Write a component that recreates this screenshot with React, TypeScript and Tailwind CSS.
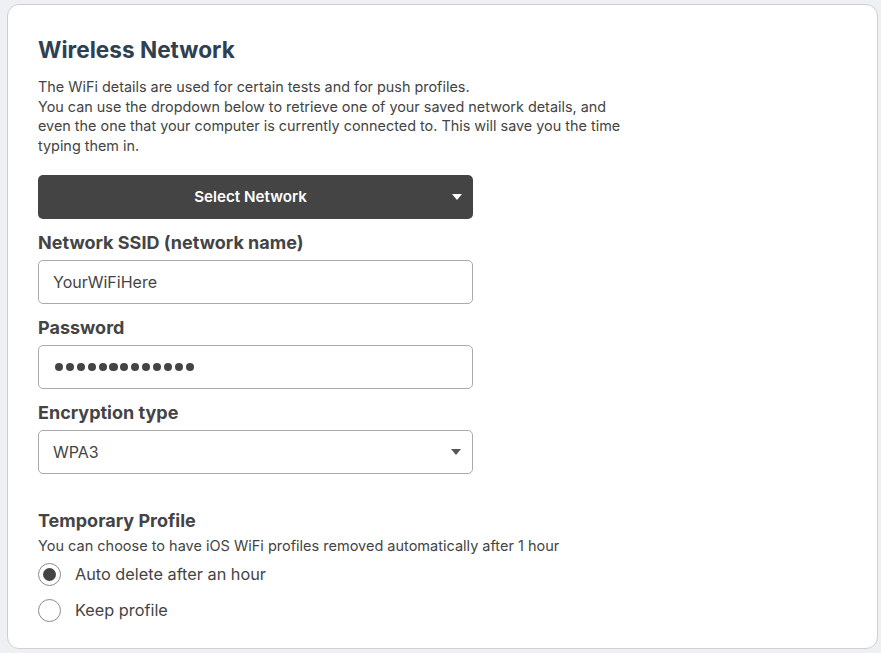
import { useState } from "react"

function Caret() {
  return (
    <svg width="10" height="6" viewBox="0 0 10 6" className="shrink-0">
      <path d="M0 0h10L5 6z" fill="currentColor" />
    </svg>
  )
}

function Radio({ checked, label, onClick }: { checked: boolean; label: string; onClick: () => void }) {
  return (
    <button type="button" onClick={onClick} className="flex items-center gap-[14px] h-[36px] text-left">
      <span className="w-[23px] h-[23px] rounded-full border border-[#8a8a8a] bg-white flex items-center justify-center">
        {checked ? <span className="w-[13px] h-[13px] rounded-full bg-[#444]" /> : null}
      </span>
      <span className="text-[16.3px] text-[#444]">{label}</span>
    </button>
  )
}

export default function App() {
  const [autoDelete, setAutoDelete] = useState(true)
  const dots = Array.from({ length: 13 })
  return (
    <div className="min-h-screen bg-[#eef0f3] pt-[4px] pl-[7px] pr-[4px] pb-[4px] font-['Inter',sans-serif]">
      <div className="bg-white border border-[#cfcfcf] rounded-[12px] w-[871px] h-[645px] px-[30px] pt-[30px]">
        <h1 className="text-[22.6px] font-bold text-[#2f4050] leading-[30px]">Wireless Network</h1>
        <p className="mt-[12px] text-[14.4px] leading-[19.5px] text-[#444] max-w-[592px]">
          The WiFi details are used for certain tests and for push profiles.
          <br />
          You can use the dropdown below to retrieve one of your saved network details, and even the one that your
          computer is currently connected to. This will save you the time typing them in.
        </p>
        <div className="w-[435px] mt-[20px]">
          <button
            type="button"
            className="w-full h-[44px] bg-[#444] rounded-[5px] text-white font-semibold text-[15.2px] flex items-center pl-[11px] pr-[11px]"
          >
            <span className="flex-1 text-center">Select Network</span>
            <Caret />
          </button>
          <div className="mt-[13px] text-[18px] font-bold text-[#444] leading-[22px]">Network SSID (network name)</div>
          <div className="mt-[6px] h-[44px] border border-[#aaa] rounded-[5px] flex items-center px-[14px] text-[16px] text-[#444]">
            YourWiFiHere
          </div>
          <div className="mt-[13px] text-[18px] font-bold text-[#444] leading-[22px]">Password</div>
          <div className="mt-[6px] h-[44px] border border-[#aaa] rounded-[5px] flex items-center gap-[2.7px] px-[16px]">
            {dots.map((_, i) => (
              <span key={i} className="w-[8.2px] h-[8.2px] rounded-full bg-[#444]" />
            ))}
          </div>
          <div className="mt-[13px] text-[18px] font-bold text-[#444] leading-[22px]">Encryption type</div>
          <div className="mt-[6px] h-[44px] border border-[#aaa] rounded-[5px] flex items-center pl-[14px] pr-[11px] text-[16px] text-[#444]">
            <span className="flex-1">WPA3</span>
            <span className="text-[#555]">
              <Caret />
            </span>
          </div>
        </div>
        <div className="mt-[36px] text-[18px] font-bold text-[#444] leading-[22px]">Temporary Profile</div>
        <div className="mt-[4px] text-[14.5px] text-[#444] leading-[20px]">
          You can choose to have iOS WiFi profiles removed automatically after 1 hour
        </div>
        <div className="flex flex-col">
          <Radio checked={autoDelete} label="Auto delete after an hour" onClick={() => setAutoDelete(true)} />
          <Radio checked={!autoDelete} label="Keep profile" onClick={() => setAutoDelete(false)} />
        </div>
      </div>
    </div>
  )
}
